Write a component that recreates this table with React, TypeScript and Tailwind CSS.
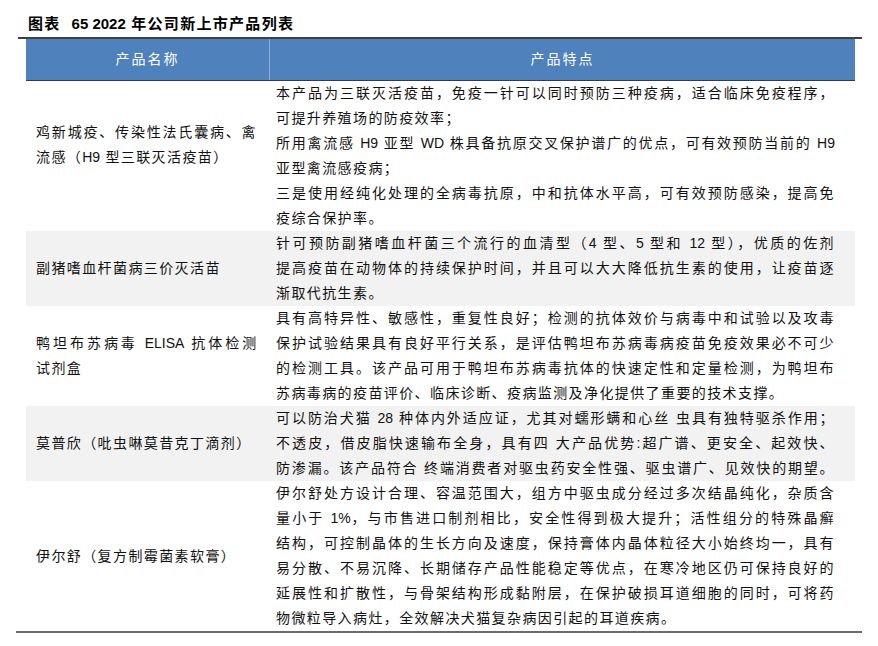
import React from "react";

type Line = { text: string; full?: boolean; tight?: boolean };

type Row = {
    name: Line[];
    nameOffset?: boolean;
    lines: Line[];
    shaded?: boolean;
};

const rows: Row[] = [
    {
        name: [
            { text: "鸡新城疫、传染性法氏囊病、禽", full: true },
            { text: "流感（H9 型三联灭活疫苗）" },
        ],
        nameOffset: true,
        lines: [
            { text: "本产品为三联灭活疫苗，免疫一针可以同时预防三种疫病，适合临床免疫程序，", full: true },
            { text: "可提升养殖场的防疫效率；" },
            { text: "所用禽流感 H9 亚型 WD 株具备抗原交叉保护谱广的优点，可有效预防当前的 H9", full: true },
            { text: "亚型禽流感疫病；" },
            { text: "三是使用经纯化处理的全病毒抗原，中和抗体水平高，可有效预防感染，提高免", full: true },
            { text: "疫综合保护率。" },
        ],
    },
    {
        shaded: true,
        name: [{ text: "副猪嗜血杆菌病三价灭活苗" }],
        lines: [
            { text: "针可预防副猪嗜血杆菌三个流行的血清型（4 型、5 型和 12 型），优质的佐剂", full: true },
            { text: "提高疫苗在动物体的持续保护时间，并且可以大大降低抗生素的使用，让疫苗逐", full: true },
            { text: "渐取代抗生素。" },
        ],
    },
    {
        name: [
            { text: "鸭坦布苏病毒 ELISA 抗体检测", full: true, tight: true },
            { text: "试剂盒" },
        ],
        lines: [
            { text: "具有高特异性、敏感性，重复性良好；检测的抗体效价与病毒中和试验以及攻毒", full: true },
            { text: "保护试验结果具有良好平行关系，是评估鸭坦布苏病毒病疫苗免疫效果必不可少", full: true },
            { text: "的检测工具。该产品可用于鸭坦布苏病毒抗体的快速定性和定量检测，为鸭坦布", full: true },
            { text: "苏病毒病的疫苗评价、临床诊断、疫病监测及净化提供了重要的技术支撑。" },
        ],
    },
    {
        shaded: true,
        name: [{ text: "莫普欣（吡虫啉莫昔克丁滴剂）" }],
        lines: [
            { text: "可以防治犬猫 28 种体内外适应证，尤其对蠕形螨和心丝 虫具有独特驱杀作用；", full: true },
            { text: "不透皮，借皮脂快速输布全身，具有四 大产品优势:超广谱、更安全、起效快、", full: true },
            { text: "防渗漏。该产品符合 终端消费者对驱虫药安全性强、驱虫谱广、见效快的期望。", full: true },
        ],
    },
    {
        name: [{ text: "伊尔舒（复方制霉菌素软膏）" }],
        lines: [
            { text: "伊尔舒处方设计合理、容温范围大，组方中驱虫成分经过多次结晶纯化，杂质含", full: true },
            { text: "量小于 1%，与市售进口制剂相比，安全性得到极大提升；活性组分的特殊晶癣", full: true },
            { text: "结构，可控制晶体的生长方向及速度，保持膏体内晶体粒径大小始终均一，具有", full: true },
            { text: "易分散、不易沉降、长期储存产品性能稳定等优点，在寒冷地区仍可保持良好的", full: true },
            { text: "延展性和扩散性，与骨架结构形成黏附层，在保护破损耳道细胞的同时，可将药", full: true },
            { text: "物微粒导入病灶，全效解决犬猫复杂病因引起的耳道疾病。" },
        ],
    },
];

// latin runs (H9, ELISA, 1%) are set without the extra CJK tracking
function Mixed ({ text }: { text: string })
{
    const parts = text.split(/([A-Za-z0-9%]+)/);
    return (
        <>
            {parts.map((p, i) =>
                i % 2 === 1 ? (
                    <span key={i} className="tracking-normal">{p}</span>
                ) : (
                    <React.Fragment key={i}>{p}</React.Fragment>
                )
            )}
        </>
    );
}

function TextLine ({ line }: { line: Line })
{
    return (
        <div
            className={`h-[25px] whitespace-nowrap leading-[25px] ${line.full ? "text-justify [text-align-last:justify]" : "text-left"} ${line.tight ? "tracking-[0.8px]" : ""}`}
        >
            <Mixed text={line.text} />
        </div>
    );
}

export default function App ()
{
    return (
        <div className="h-[646px] w-[878px] bg-white text-[14px] tracking-[1.4px] text-[#111] [font-family:'Liberation_Sans','Noto_Sans_CJK_SC',sans-serif]">
            <div className="h-[37px] pl-[28px] pt-[15px] text-[15px] font-bold leading-[18px] tracking-[1.3px] text-black">
                图表&nbsp; <span className="tracking-normal">65 2022</span> 年公司新上市产品列表
            </div>

            <div className="ml-[18px] w-[844px] border-t-2 border-[#404040]">
                <div className="mx-[8px] w-[829px]">
                    <div className="grid h-[42px] grid-cols-[244px_1fr] border-b border-[#3a3a3a] bg-[#4f81bd] text-white">
                        <div className="flex items-center justify-center border-r border-[#8fabd3] tracking-[2px]">
                            产品名称
                        </div>
                        <div className="flex items-center justify-center tracking-[2px]">
                            产品特点
                        </div>
                    </div>

                    {rows.map((row, i) => (
                        <div
                            key={i}
                            className={`grid grid-cols-[244px_1fr] ${row.shaded ? "bg-[#f2f2f2]" : "bg-white"}`}
                        >
                            <div className={`flex flex-col justify-center pl-[10px] pr-[13px] ${row.nameOffset ? "pb-[22px]" : ""}`}>
                                {row.name.map((l, j) => (
                                    <TextLine key={j} line={l} />
                                ))}
                            </div>
                            <div className="pl-[6px] pr-[20px]">
                                {row.lines.map((l, j) => (
                                    <TextLine key={j} line={l} />
                                ))}
                            </div>
                        </div>
                    ))}
                </div>
            </div>

            <div className="ml-[16px] w-[846px] border-t-2 border-[#6b6b6b]" />
        </div>
    );
}
